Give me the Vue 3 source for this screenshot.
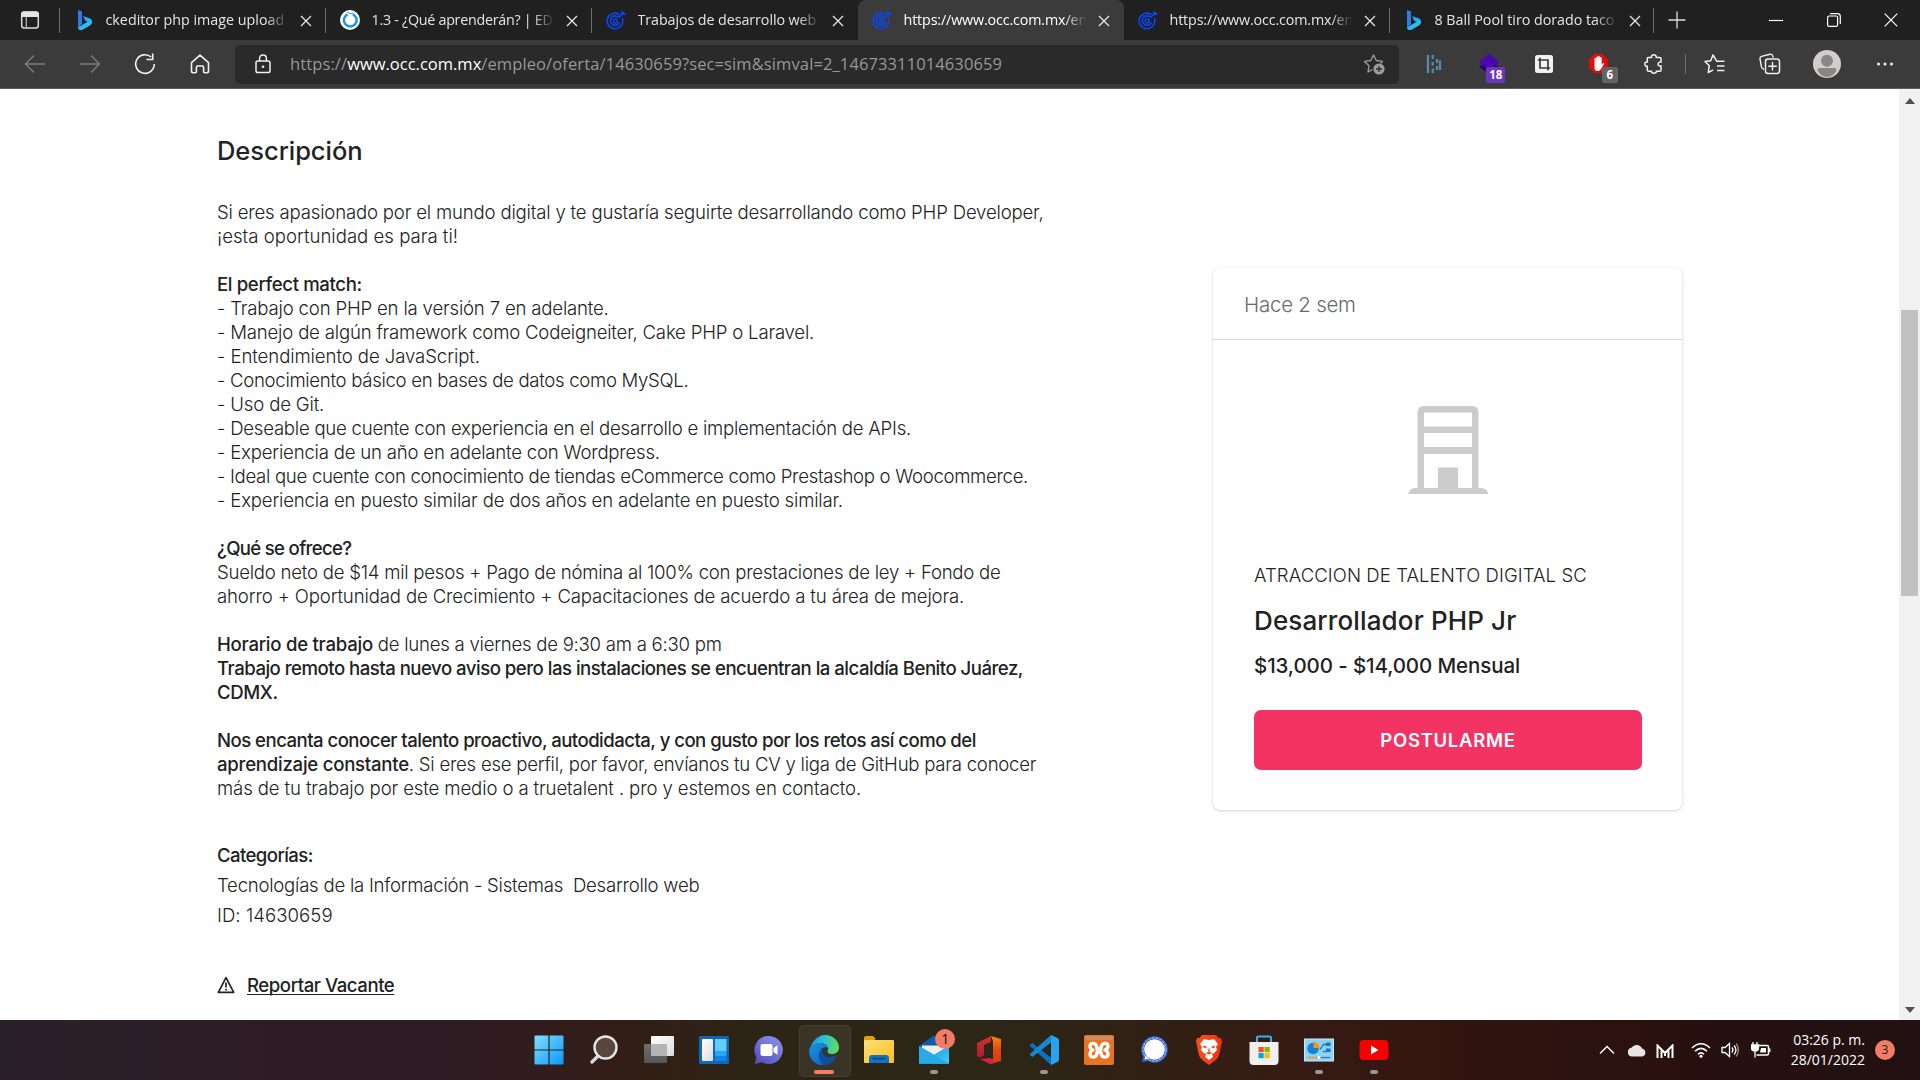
<script setup>
const tabs = [
  { icon: 'bing', title: 'ckeditor php image upload', line: true, spacing: 0 },
  { icon: 'edx', title: '1.3 - ¿Qué aprenderán? | EDUC', line: true, spacing: -0.27 },
  { icon: 'occ', title: 'Trabajos de desarrollo web (PHP)', line: false, spacing: -0.08 },
  { icon: 'occ', title: 'https://www.occ.com.mx/empleo', line: false, active: true, spacing: -0.14 },
  { icon: 'occ', title: 'https://www.occ.com.mx/empleo', line: true, spacing: -0.14 },
  { icon: 'bing', title: '8 Ball Pool tiro dorado taco', line: true, spacing: -0.03 },
]

// s: text segments, those starting with "*" are emphasised; t: letter tracking in px.
const lines = [
  { s: ['Si eres apasionado por el mundo digital y te gustaría seguirte desarrollando como PHP Developer,'], t: -0.19 },
  { s: ['¡esta oportunidad es para ti!'], t: 0 },
  { s: [], t: 0 },
  { s: ['*El perfect match:'], t: -0.37 },
  { s: ['- Trabajo con PHP en la versión 7 en adelante.'], t: -0.19 },
  { s: ['- Manejo de algún framework como Codeigneiter, Cake PHP o Laravel.'], t: -0.2 },
  { s: ['- Entendimiento de JavaScript.'], t: -0.09 },
  { s: ['- Conocimiento básico en bases de datos como MySQL.'], t: -0.31 },
  { s: ['- Uso de Git.'], t: -0.17 },
  { s: ['- Deseable que cuente con experiencia en el desarrollo e implementación de APIs.'], t: -0.245 },
  { s: ['- Experiencia de un año en adelante con Wordpress.'], t: -0.21 },
  { s: ['- Ideal que cuente con conocimiento de tiendas eCommerce como Prestashop o Woocommerce.'], t: -0.31 },
  { s: ['- Experiencia en puesto similar de dos años en adelante en puesto similar.'], t: -0.19 },
  { s: [], t: 0 },
  { s: ['*¿Qué se ofrece?'], t: -0.68 },
  { s: ['Sueldo neto de $14 mil pesos + Pago de nómina al 100% con prestaciones de ley + Fondo de'], t: -0.245 },
  { s: ['ahorro + Oportunidad de Crecimiento + Capacitaciones de acuerdo a tu área de mejora.'], t: -0.145 },
  { s: [], t: 0 },
  { s: ['*Horario de trabajo', ' de lunes a viernes de 9:30 am a 6:30 pm'], t: -0.26 },
  { s: ['*Trabajo remoto hasta nuevo aviso pero las instalaciones se encuentran la alcaldía Benito Juárez,'], t: -0.51 },
  { s: ['*CDMX.'], t: -0.39 },
  { s: [], t: 0 },
  { s: ['*Nos encanta conocer talento proactivo, autodidacta, y con gusto por los retos así como del'], t: -0.54 },
  { s: ['*aprendizaje constante', '. Si eres ese perfil, por favor, envíanos tu CV y liga de GitHub para conocer'], t: -0.25 },
  { s: ['más de tu trabajo por este medio o a truetalent . pro y estemos en contacto.'], t: -0.125 },
]

const apps = [
  { id: 'start' }, { id: 'search' }, { id: 'tasks' }, { id: 'widgets' }, { id: 'chat' },
  { id: 'edge', active: true }, { id: 'files' }, { id: 'mail', open: true, badge: '1' },
  { id: 'office' }, { id: 'code', open: true }, { id: 'xampp' }, { id: 'signal' },
  { id: 'brave' }, { id: 'store' }, { id: 'panel', open: true }, { id: 'youtube', open: true },
]
</script>

<template>
  <div class="screen">
    <svg class="defs" width="0" height="0" aria-hidden="true">
      <defs>
        <linearGradient id="gBing" x1="0" y1="0" x2="0.6" y2="1"><stop offset="0" stop-color="#2f7df0" /><stop offset=".55" stop-color="#21b4f2" /><stop offset="1" stop-color="#3ec8f5" /></linearGradient>
        <linearGradient id="gWin" x1="0" y1="0" x2="1" y2="1"><stop offset="0" stop-color="#7fe0ff" /><stop offset="1" stop-color="#0a97ff" /></linearGradient>
        <linearGradient id="gWhite" x1="0" y1="0" x2="1" y2="1"><stop offset="0" stop-color="#fff" /><stop offset="1" stop-color="#dcdcdc" /></linearGradient>
        <linearGradient id="gGray" x1="0" y1="0" x2="0" y2="1"><stop offset="0" stop-color="#6e6e6e" /><stop offset="1" stop-color="#565656" /></linearGradient>
        <linearGradient id="gChat" x1="1" y1="0" x2="0.2" y2="1"><stop offset="0" stop-color="#8f96ee" /><stop offset="1" stop-color="#5350bd" /></linearGradient>
        <linearGradient id="gEdgeTop" x1="0" y1="0.4" x2="1" y2="0.5"><stop offset="0" stop-color="#1b9be0" /><stop offset=".5" stop-color="#2cc3cf" /><stop offset="1" stop-color="#5fe04d" /></linearGradient>
        <linearGradient id="gEdgeLow" x1="0" y1="0" x2="0.5" y2="1"><stop offset="0" stop-color="#1a8fe0" /><stop offset="1" stop-color="#0f6fc8" /></linearGradient>
        <linearGradient id="gFolder" x1="0" y1="0" x2="1" y2="1"><stop offset="0" stop-color="#ffe07a" /><stop offset="1" stop-color="#fcbd1c" /></linearGradient>
        <linearGradient id="gMail" x1="0" y1="0" x2="1" y2="1"><stop offset="0" stop-color="#1b87d6" /><stop offset="1" stop-color="#3fd0fb" /></linearGradient>
        <linearGradient id="gOffL" x1="0" y1="0" x2="0" y2="1"><stop offset="0" stop-color="#d1322a" /><stop offset="1" stop-color="#a91a3c" /></linearGradient>
        <linearGradient id="gOffR" x1="0" y1="0" x2="0" y2="1"><stop offset="0" stop-color="#f78b0e" /><stop offset=".5" stop-color="#e4470f" /><stop offset="1" stop-color="#d33a12" /></linearGradient>
        <linearGradient id="gBrave" x1="0" y1="0" x2="1" y2="0"><stop offset="0" stop-color="#f4511e" /><stop offset="1" stop-color="#f5300d" /></linearGradient>
      </defs>

      <symbol id="bing" viewBox="0 0 20 20"><path d="M4 0l4 1.5V14l-4 4z" fill="#2b7be9" /><path d="M4 17.6 8 15l5.5-3.2-2.6-1.3L9.2 6 16 8.6c1.700.8 2 2 2 3.400 0 1.300-.7 2.500-1.700 3.200L8 19.900c-1.700.8-4-.3-4-2.300z" fill="url(#gBing)" /></symbol>
      <symbol id="edx" viewBox="0 0 20 20"><circle cx="10" cy="10" r="10" fill="#fff" /><path d="M7.500 4.300A6.400 6.400 0 1 0 13 4.300" fill="none" stroke="#1a94ee" stroke-width="2.400" /><path d="M7.200 2.500l5.800 1.600" stroke="#1a94ee" stroke-width="1" /></symbol>
      <symbol id="occ" viewBox="0 0 20 20"><g fill="none" stroke="#0b45f5"><path d="M13.800 4.800A7.800 7.800 0 1 0 16.200 8" stroke-width="1.600" /><path d="M12.500 7.400a4.700 4.700 0 1 0 1 4.800" stroke-width="1.600" /><circle cx="9.300" cy="11" r="1.900" stroke-width="1.500" /><path d="M12.500 7.800 18 2.200M15.600 4.400l.4-3.200M15.800 4.400l3.600-.4" stroke-width="1.600" /></g></symbol>

      <symbol id="start" viewBox="0 0 30 30"><rect x=".5" y=".5" width="29" height="29" rx="1" fill="url(#gWin)" /><path d="M15 0v30M0 15h30" stroke="#2c2018" stroke-width="1.200" /></symbol>
      <symbol id="search" viewBox="0 0 30 30"><path d="M9.500 20.500 3 27" stroke="#d5d8dc" stroke-width="3.400" stroke-linecap="round" /><circle cx="16.500" cy="12.500" r="11" fill="#57473f" stroke="#e4e6e8" stroke-width="2.400" /></symbol>
      <symbol id="tasks" viewBox="0 0 30 30"><rect x="0" y="9" width="23" height="19" rx="1" fill="url(#gGray)" /><rect x="7" y="1" width="23" height="20" rx="1" fill="url(#gWhite)" /><rect x="7" y="9" width="16" height="12" fill="#b4b4b4" /></symbol>
      <symbol id="widgets" viewBox="0 0 30 30"><rect x="0" y="1" width="30" height="28" rx="1.500" fill="#1267b5" /><rect x="3" y="4" width="11" height="22" rx="1" fill="url(#gWhite)" /><rect x="16" y="4" width="11.500" height="12" fill="#62cbfa" /><rect x="16" y="16" width="11.500" height="5" fill="#2ba6f6" /><rect x="16" y="21" width="11.500" height="5" fill="#0d84e8" /></symbol>
      <symbol id="chat" viewBox="0 0 30 30"><path d="M15 1a14 14 0 1 1-7 26.200L.6 29l1.700-7A14 14 0 0 1 15 1z" fill="url(#gChat)" /><rect x="6.500" y="9" width="12" height="12" rx="2" fill="#fff" /><path d="M19.500 13l4-2.800v9.600l-4-2.800z" fill="#fff" /></symbol>
      <symbol id="edge" viewBox="0 0 30 30"><path d="M1 17C1 8 8 0 16 0c8 0 14 6 14 12.500 0 4-3 6.500-7 6.500-3 0-5-1-4.500-3 .5-2 1-2 .5-3.500C18 9 14 7.500 10 8 5 8.600 1.600 13 1 17z" fill="url(#gEdgeTop)" /><path d="M0 16C1 10.500 6 7.600 11 7.800c4.500.2 7.500 2.700 8 5.200-2.500-1.600-6-.8-7.200 2C10 19 13 25 19 25.500c-2 3-5 4.500-7 4.500C5 29 0 23 0 16z" fill="url(#gEdgeLow)" /><path d="M10 20c0-3.500 2-6.500 4.500-7.500C11.800 17 15 22 20 22.200c3 .1 5-.8 6.700-1.700.6-.3 1.300.2.900.9C25.500 25.500 21 30 15.500 30 11.500 29 10 24 10 20z" fill="#0f4f9e" /></symbol>
      <symbol id="files" viewBox="0 0 30 30"><path d="M0 3q0-2 2-2h7l3 3h-1l-2 3H0z" fill="#e0a00c" /><rect x="0" y="5" width="30" height="23" rx="1" fill="url(#gFolder)" /><path d="M5 28v-5q0-3 3-3h14q3 0 3 3v5z" fill="#1172c8" /><path d="M9 23.600h12" stroke="#0a4987" stroke-width="1.600" stroke-linecap="round" /></symbol>
      <symbol id="mail" viewBox="0 0 30 30"><path d="M0 11 14 1q1-.7 2 0l14 10v6H0z" fill="#0c5cae" /><path d="M3 10.500h24v7L15 23 3 17z" fill="#eee" /><path d="M0 11l15 9 15-9v17.500H0z" fill="#27a4e4" /><path d="M0 28.500 30 11v17.500z" fill="url(#gMail)" /><path d="M0 11l30 17.500H0z" fill="#2aa9e8" /></symbol>
      <symbol id="office" viewBox="0 0 30 30"><path d="M3 8 17 1v6l-7 3v10l-4 3-3-2z" fill="url(#gOffL)" /><path d="M17 1l10 3v22l-10 3v-5h2V6z" fill="url(#gOffR)" /><path d="M6 24l11-1 2 5-3 1z" fill="#d7213f" /></symbol>
      <symbol id="code" viewBox="0 0 30 30"><path d="M1.500 9.300 3.300 8 22 22.500V30L1.500 11.600q-1-1.200 0-2.300z" fill="#0a72bd" /><path d="M1.500 20.700 3.300 22 22 7.500V0L1.500 18.400q-1 1.200 0 2.300z" fill="#1788d2" /><path d="M22 0l6.500 3Q30 3.800 30 5.500v19q0 1.700-1.500 2.500L22 30z" fill="#28a4ee" /></symbol>
      <symbol id="xampp" viewBox="0 0 30 30"><rect width="30" height="30" rx="2" fill="#e87423" /><rect x="1" y="1" width="28" height="4" rx="2" fill="#d18a5a" /><path d="M9.500 8.500q-3.500-.5-3.500 2.700 0 2.800 3 3.800-3 1.200-3 4.200t3.500 3q3.500-.5 3.500-5.200h4q0 4.700 3.500 5.200 3.500 0 3.500-3t-3-4.200q3-1 3-3.800 0-3.200-3.500-2.700Q17 9 17 14h-4q0-5-3.500-5.500z" fill="none" stroke="#fff" stroke-width="3.300" stroke-linejoin="round" /></symbol>
      <symbol id="signal" viewBox="0 0 30 30"><circle cx="15.500" cy="14.500" r="12" fill="#fff" stroke="#3468d8" stroke-width="2.400" /><path d="M3 27l1.500-6.500L9.500 26z" fill="#3468d8" /><circle cx="15.500" cy="14.500" r="11.300" fill="none" stroke="#3468d8" stroke-width="2" /><circle cx="15.500" cy="14.500" r="11.600" fill="none" stroke="#cfdcfa" stroke-width=".9" stroke-dasharray="2.500 1.200" /><path d="M5.500 24.500l1-4 3.500 3.300z" fill="#fff" /></symbol>
      <symbol id="brave" viewBox="0 0 30 30"><path d="M8 0h14l2.500 3L27 3l1 4-1 3q-1 8-3 12.500Q21 26 15 30 9 26 6 22.500 4 18 3 10L2 7l1-4 2.500 0z" fill="url(#gBrave)" /><path d="M10 4l5 1 5-1 4 5-2 3 1 3-3 3-2 1 1 3-4 3-4-3 1-3-2-1-3-3 1-3-2-3z" fill="#fff" /><path d="M10 10.500l3 1.500-1.500 1-3-.8zM20 10.500 17 12l1.500 1 3-.8zM15 12l1 4.500h-2zM11.500 18l3.500-1.300 3.500 1.300-3.500 1.500z" fill="#f4431a" /></symbol>
      <symbol id="store" viewBox="0 0 30 30"><path d="M8 9V2.800Q8 1.500 9.300 1.500h11.400Q22 1.500 22 2.800V9" fill="none" stroke="#2fb4f0" stroke-width="2" /><path d="M.5 7h29v19q0 4-4 4h-21q-4 0-4-4z" fill="#efefef" /><path d="M8 6V4M22 6V4" stroke="#2fb4f0" stroke-width="2" /><path d="M9.500 12h5.200v5.200H9.500z" fill="#f25022" /><path d="M15.500 12h5.200v5.200h-5.200z" fill="#7fba00" /><path d="M9.500 18h5.200v5.200H9.500z" fill="#00a4ef" /><path d="M15.500 18h5.200v5.200h-5.200z" fill="#ffb900" /></symbol>
      <symbol id="panel" viewBox="0 0 30 30"><rect x=".5" y="4" width="29" height="22" fill="#8ed2f3" stroke="#c9ecfb" /><circle cx="9" cy="13.500" r="5.800" fill="#1383cf" /><path d="M9.500 13V6.500a6.500 6.500 0 0 1 6 6.500z" fill="#f7941d" /><path d="M16 14.500l3.500-5h3M19 16.500h3" stroke="#1976b8" stroke-width="1.300" fill="none" /><path d="M22 7.500h4.500v3.500H22zM22 13.500h4.500V17H22z" fill="#1976b8" /><path d="M4 22.500h10" stroke="#f7941d" stroke-width="1.400" /><path d="M14 22.500h12" stroke="#1976b8" stroke-width="1.200" /><circle cx="15" cy="22.500" r="1.500" fill="#fff" /></symbol>
      <symbol id="youtube" viewBox="0 0 30 30"><rect x=".5" y="5" width="29" height="20" rx="4" fill="#f60000" /><path d="M12 10.500l7.500 4.500-7.500 4.500z" fill="#fff" /></symbol>
    </svg>

    <header class="tabstrip">
      <div class="tab-actions">
        <svg width="20" height="20" viewBox="0 0 20 20"><rect x="1.700" y="2" width="16.600" height="16" rx="2.500" fill="none" stroke="#dcdcdc" stroke-width="1.500" /><path d="M1.500 3.500q0-2 2-2h13q2 0 2 2V7h-17z" fill="#e6e6e6" /><path d="M6.300 7v11" stroke="#b5b5b5" stroke-width="1.300" /></svg>
      </div>
      <div v-for="(t, i) in tabs" :key="i" class="tab" :class="{ active: t.active, line: t.line }">
        <svg class="favicon" width="20" height="20"><use :href="'#' + t.icon" /></svg>
        <span class="tab-title" :style="{ letterSpacing: t.spacing + 'px' }">{{ t.title }}</span>
        <svg class="tab-close" width="12" height="12" viewBox="0 0 12 12"><path d="M1 1l10 10M11 1 1 11" stroke="#e6e6e6" stroke-width="1.300" /></svg>
      </div>
      <div class="new-tab"><svg width="18" height="18" viewBox="0 0 18 18"><path d="M9 .5v17M.5 9h17" stroke="#dcdcdc" stroke-width="1.300" /></svg></div>
      <div class="window-buttons">
        <span><svg width="14" height="14" viewBox="0 0 14 14"><path d="M0 7.500h14" stroke="#fff" stroke-width="1.200" /></svg></span>
        <span><svg width="14" height="14" viewBox="0 0 14 14"><rect x=".6" y="3" width="10" height="10.400" rx="1.500" fill="none" stroke="#fff" stroke-width="1.200" /><path d="M3 .7h7.500q2.800 0 2.800 2.800V11" fill="none" stroke="#fff" stroke-width="1.200" /></svg></span>
        <span><svg width="14" height="14" viewBox="0 0 14 14"><path d="M.7.7l12.600 12.600M13.300.7.7 13.300" stroke="#fff" stroke-width="1.200" /></svg></span>
      </div>
    </header>

    <div class="toolbar">
      <nav class="nav">
        <span><svg width="22" height="20" viewBox="0 0 22 20"><path d="M21 10H1.500M10 1.500 1.500 10l8.500 8.500" fill="none" stroke="#7c7c7c" stroke-width="1.400" /></svg></span>
        <span><svg width="22" height="20" viewBox="0 0 22 20"><path d="M1 10h19.500M12 1.500l8.500 8.500-8.500 8.500" fill="none" stroke="#7c7c7c" stroke-width="1.400" /></svg></span>
        <span><svg width="22" height="22" viewBox="0 0 22 22"><path d="M20.300 11a9.300 9.300 0 1 1-3.200-7M12.500 6.500h6.200V.6" fill="none" stroke="#f2f2f2" stroke-width="1.600" /></svg></span>
        <span><svg width="20" height="20" viewBox="0 0 20 20"><path d="M1.500 8.600 10 1.200l8.500 7.400V17q0 1.700-1.700 1.700h-2q-1.200 0-1.200-1.200v-4.200q0-1.300-1.300-1.300H7.700q-1.300 0-1.300 1.300v4.200q0 1.200-1.200 1.200h-2q-1.700 0-1.700-1.700z" fill="none" stroke="#f2f2f2" stroke-width="1.600" stroke-linejoin="round" /></svg></span>
      </nav>
      <div class="address">
        <svg class="lock" width="16" height="20" viewBox="0 0 16 20"><rect x="1" y="7" width="14" height="11.500" rx="1.800" fill="none" stroke="#f0f0f0" stroke-width="1.500" /><path d="M4.600 7V4.400q0-3.300 3.400-3.300t3.400 3.300V7" fill="none" stroke="#f0f0f0" stroke-width="1.500" /><circle cx="8" cy="12.700" r="1.300" fill="#f0f0f0" /></svg>
        <span class="url">https://<b>www.occ.com.mx</b>/empleo/oferta/14630659?sec=sim&amp;simval=2_14673311014630659</span>
        <svg class="fav-add" width="22" height="22" viewBox="0 0 22 22"><path d="M9.500 16.500 5 19l1-6.200-4.500-4.400 6.200-.9L10.500 2l2.800 5.500 6.200.9-2 2" fill="none" stroke="#9a9a9a" stroke-width="1.400" stroke-linejoin="round" /><circle cx="16" cy="16" r="5.600" fill="#9d9d9d" /><path d="M16 13v6M13 16h6" stroke="#2a2a2a" stroke-width="1.300" /></svg>
      </div>
      <div class="extensions">
        <span><svg width="16" height="20" viewBox="0 0 16 20"><path d="M2 1v18M6.700 1v4M6.700 8v3.500M6.700 14.500V19M11 5v4M14 6.500V16M11 12v4" stroke="#538ca3" stroke-width="2.300" fill="none" /></svg></span>
        <span><svg width="22" height="22" viewBox="0 0 22 22"><path d="M1 13.500 11 9l10 4.500L11 21z" fill="#23056e" /><path d="M11 .5 21 9 11 17.500 1 9z" fill="#4a06b0" /></svg><i class="count violet">18</i></span>
        <span><svg width="18" height="18" viewBox="0 0 18 18"><rect width="18" height="18" rx="2.500" fill="#f1f1f1" /><path d="M5 2.800V13h10.200M2.800 5H13v10.200" fill="none" stroke="#3a3a3a" stroke-width="1.700" /></svg></span>
        <span><svg width="22" height="22" viewBox="0 0 22 22"><path d="M6.500 1h8L20 6.500v8L14.500 20h-8L1 14.500v-8z" fill="#e40d0d" /><path d="M6.500 11V6q0-1 .9-1t.9 1V4.400q0-1 .9-1t.9 1V4q0-1 .9-1t.9 1v1q0-.9.900-.9t.9.900v7l1-1.500q.8-.8 1.500 0L13 16q-1 2-3.500 2-3 0-3-3.500z" fill="#fff" /></svg><i class="count gray">6</i></span>
        <span><svg width="20" height="20" viewBox="0 0 20 20"><path d="M4 3.500h3.500q-.3-2.700 2.300-2.700t2.400 2.700H16q1 0 1 1v3.600q-3-.2-3 2t3 2V16q0 1.200-1 1.200h-3.600q.1 2-2.500 2t-2.400-2H4.500q-1.200 0-1.200-1.200v-3.700q-2.500.2-2.500-2.200t2.500-2.200V4.500q0-1 .7-1z" fill="none" stroke="#f0f0f0" stroke-width="1.500" /></svg></span>
        <i class="divider"></i>
        <span><svg width="22" height="20" viewBox="0 0 22 20"><path d="M12.500 6.800 9 1 6.700 6.800 1 7.500l4.300 4.200L4.200 18.500l5-2.700M12 7.300h8.500M13 12h7.500M13 16.500h7.500" fill="none" stroke="#f0f0f0" stroke-width="1.500" stroke-linejoin="round" /></svg></span>
        <span><svg width="22" height="22" viewBox="0 0 22 22"><path d="M5 16.500Q3 15.500 2.500 14L1 6q-.3-2 1.500-2.600L11 1.200q2-.5 2.700 1.600l.5 1.700" fill="none" stroke="#f0f0f0" stroke-width="1.400" /><rect x="6.500" y="6" width="14" height="14.500" rx="2.500" fill="none" stroke="#f0f0f0" stroke-width="1.500" /><path d="M13.500 9v8.500M9.300 13.300h8.500" stroke="#f0f0f0" stroke-width="1.400" /></svg></span>
        <span class="profile"><svg width="28" height="28" viewBox="0 0 28 28"><circle cx="14" cy="14" r="14" fill="#d0cecc" /><circle cx="14" cy="10.800" r="6" fill="#8a8683" /><path d="M4.500 20q0-2 2-2h15q2 0 2 2-3 7-9.500 7t-9.500-7z" fill="#8a8683" /></svg></span>
        <span class="more"><svg width="18" height="4" viewBox="0 0 18 4"><circle cx="2.500" cy="2" r="1.500" fill="#f0f0f0" /><circle cx="9" cy="2" r="1.500" fill="#f0f0f0" /><circle cx="15.500" cy="2" r="1.500" fill="#f0f0f0" /></svg></span>
      </div>
    </div>

    <div class="page">
      <main class="offer">
        <h1>Descripción</h1>
        <div class="body">
          <p v-for="(l, i) in lines" :key="i" class="row" :style="{ letterSpacing: l.t + 'px' }"><template v-for="(s, j) in l.s" :key="j"><b v-if="s[0] === '*'">{{ s.slice(1) }}</b><template v-else>{{ s }}</template></template></p>
        </div>
        <div class="categories">
          <p class="label"><b>Categorías:</b></p>
          <p>Tecnologías de la Información - Sistemas&nbsp; Desarrollo web</p>
          <p class="offer-id">ID: 14630659</p>
        </div>
        <a class="report">
          <svg width="18" height="18" viewBox="0 0 18 18"><path d="M9 1.600 16.700 16.300H1.300z" fill="none" stroke="#222" stroke-width="1.700" stroke-linejoin="round" /><path d="M9 6.500v5M9 12.700v1.800" stroke="#222" stroke-width="1.700" /></svg>
          <span>Reportar Vacante</span>
        </a>
      </main>

      <aside class="card">
        <div class="card-date"><span>Hace 2 sem</span></div>
        <div class="card-body">
          <svg class="building" width="82" height="90" viewBox="0 0 82 90"><path d="M10.500 83V8q0-7 6-7h49q6 0 6 7v75h2.500q6 0 7.500 6H1q1.500-6 7.500-6z" fill="#ccc" /><path d="M17 7.500h48V21.500H17zM17 28h48v14H17zM17 49h48v34H51V62.500H31V83H17z" fill="#fff" /></svg>
          <p class="company">ATRACCION DE TALENTO DIGITAL SC</p>
          <h2>Desarrollador PHP Jr</h2>
          <p class="salary">$13,000 - $14,000 Mensual</p>
          <button class="apply">POSTULARME</button>
        </div>
      </aside>

      <div class="scrollbar">
        <svg width="10" height="6" viewBox="0 0 10 6"><path d="M0 6 5 0l5 6z" fill="#505050" /></svg>
        <div class="thumb"></div>
        <svg width="10" height="6" viewBox="0 0 10 6"><path d="M0 0l5 6 5-6z" fill="#505050" /></svg>
      </div>
    </div>

    <footer class="taskbar">
      <div class="apps">
        <div v-for="a in apps" :key="a.id" class="app" :class="{ active: a.active, open: a.open }">
          <svg width="30" height="30"><use :href="'#' + a.id" /></svg>
          <i v-if="a.badge" class="badge">{{ a.badge }}</i>
        </div>
      </div>
      <div class="tray">
        <svg class="chev" width="16" height="10" viewBox="0 0 16 10"><path d="M1 8.500 8 1.500l7 7" fill="none" stroke="#fff" stroke-width="1.400" /></svg>
        <svg class="cloud" width="20" height="14" viewBox="0 0 20 14"><path d="M5 13.500a4.400 4.400 0 0 1-.6-8.700A6 6 0 0 1 15 5.400a4.200 4.200 0 0 1 .5 8.100z" fill="#e6e6e6" /></svg>
        <svg class="mal" width="18" height="14" viewBox="0 0 18 14"><path d="M1.500 14V1.500L9 9l7.500-7.500V14M5.500 14V6.500M12.500 14V6.500M9 9v3" fill="none" stroke="#fff" stroke-width="2" /></svg>
        <svg class="wifi" width="20" height="16" viewBox="0 0 20 16"><g fill="none" stroke="#fff" stroke-width="1.500"><path d="M1 6q9-8.500 18 0M4 9.200q6-5.700 12 0M7 12.200q3-2.700 6 0" /></g><circle cx="10" cy="14.200" r="1.500" fill="#fff" /></svg>
        <svg class="vol" width="18" height="16" viewBox="0 0 18 16"><g fill="none" stroke="#fff" stroke-width="1.300"><path d="M1 5.500h3L8.500 1.500v13L4 10.500H1zM11 5.500q2 2.500 0 5M13.200 3.500q3.500 4.500 0 9" /><path d="M15.300 1.500q4 6.500 0 13" stroke="#999" /></g></svg>
        <svg class="bat" width="20" height="18" viewBox="0 0 20 18"><path d="M8 4.500h8q1.500 0 1.500 1.500v6.500q0 1.500-1.500 1.500H5.500" fill="none" stroke="#fff" stroke-width="1.500" /><path d="M18.500 7.500v3.500" stroke="#fff" stroke-width="2" /><path d="M10 7h5v4.500H9z" fill="#fff" /><path d="M2 1v3M6 1v3M.5 4h7v3q0 3-3.500 3t-3.500-3zM4 10v6.500" fill="#fff" stroke="#fff" stroke-width="1.300" /></svg>
        <div class="clock"><span>03:26 p. m.</span><span>28/01/2022</span></div>
        <i class="notice">3</i>
      </div>
    </footer>
  </div>
</template>

<style>
body { margin: 0; overflow: hidden; }
</style>

<style scoped>
* { box-sizing: border-box; }
p, h1, h2 { margin: 0; font-weight: inherit; }
i { font-style: normal; }
svg { flex: none; display: block; }
.defs { position: absolute; }
.screen { width: 1920px; height: 1080px; overflow: hidden; display: flex; flex-direction: column; font-family: "Open Sans", "Noto Sans", sans-serif; background: #fff; }

.tabstrip { height: 40px; flex: none; display: flex; background: #202020; }
.tab-actions { width: 60px; display: flex; align-items: center; justify-content: center; position: relative; }
.tab { width: 266px; flex: none; display: flex; align-items: center; padding-left: 13.500px; position: relative; color: #e4e4e4; }
.tab:nth-child(7) { width: 264px; padding-left: 12.500px; }
.tab-actions::after, .tab.line::after { content: ""; position: absolute; right: 0; top: 8px; width: 1px; height: 25px; background: #6c6c6c; }
.tab.active { background: #3b3b3b; border-radius: 8px 8px 0 0; color: #fff; }
.tab-title { width: 181px; margin-left: 12px; font-size: 14.300px; line-height: 20px; white-space: nowrap; overflow: hidden; -webkit-mask-image: linear-gradient(90deg, #000 160px, transparent 183px); mask-image: linear-gradient(90deg, #000 160px, transparent 183px); }
.tab-close { margin-left: 13px; margin-top: 1px; }
.new-tab { width: 46px; display: flex; align-items: center; justify-content: center; }
.window-buttons { margin-left: auto; display: flex; }
.window-buttons span { width: 57.500px; display: flex; align-items: center; justify-content: center; }

.toolbar { height: 49px; flex: none; display: flex; align-items: center; background: #3b3b3b; border-bottom: 1px solid #5e5e5e; }
.nav { display: flex; width: 235px; padding-left: 7px; }
.nav span { width: 55px; height: 40px; display: flex; align-items: center; justify-content: center; }
.address { width: 1164px; height: 39px; border-radius: 5px; background: #2a2a2a; display: flex; align-items: center; padding: 0 14px 0 20px; }
.url { margin-left: 19px; margin-top: -2px; font-size: 16.500px; color: #989898; white-space: nowrap; letter-spacing: 0.110px; }
.url b { font-weight: 400; color: #fff; letter-spacing: 0; }
.fav-add { margin-left: auto; }
.extensions { flex: 1; display: flex; align-items: center; padding-left: 7px; }
.extensions span { width: 55.200px; flex: none; height: 40px; display: flex; align-items: center; justify-content: center; position: relative; }
.divider { width: 1px; height: 20px; background: #707070; margin: 0 1px 0 3px; }
.profile { margin-left: 2.500px; }
.more { margin-left: 2px; }
.count { position: absolute; right: 3px; bottom: 1px; height: 16px; min-width: 16px; padding: 0 3px; border-radius: 2px; color: #fff; font-size: 11.500px; font-weight: 700; line-height: 16px; text-align: center; }
.violet { background: #6c35bd; right: 11px; }
.gray { background: #636363; right: 9px; }

.page { height: 931px; flex: none; display: flex; background: #fff; font-family: "HK Grotesk", Inter, "Open Sans", sans-serif; color: #222; }
.offer { width: 1213px; padding-left: 217px; padding-top: 44px; font-size: 18.600px; font-weight: 300; letter-spacing: -0.250px; }
.offer b { font-weight: 500; }
h1 { font-size: 25.500px; font-weight: 500; line-height: 36px; letter-spacing: -0.050px; }
.body { margin-top: 31px; }
.row { height: 24px; line-height: 24px; white-space: pre; }
.categories { margin-top: 40px; line-height: 30px; white-space: nowrap; }
.label { letter-spacing: -0.600px; }
.offer-id { letter-spacing: 0.050px; }
.report { display: flex; align-items: center; margin-top: 42px; height: 26px; font-weight: 500; letter-spacing: -0.450px; }
.report span { margin-left: 12px; line-height: 24px; text-decoration: underline; text-decoration-thickness: 1px; text-decoration-skip-ink: none; text-underline-offset: 2px; }

.card { width: 469px; height: 542px; margin-top: 179px; border-radius: 8px; background: #fff; box-shadow: 0 1px 3px rgba(0, 0, 0, .16), 0 0 8px rgba(0, 0, 0, .04); }
.card-date { height: 72px; border-bottom: 1px solid #d8d8d8; padding: 2px 0 0 31px; display: flex; align-items: center; font-size: 20.500px; letter-spacing: -0.250px; font-weight: 300; color: #6a6a6a; }
.card-body { padding: 65px 40px 0 41px; display: flex; flex-direction: column; }
.building { align-self: center; }
.company { margin-top: 68px; font-size: 18.500px; line-height: 24px; letter-spacing: 0.100px; font-weight: 300; white-space: nowrap; }
h2 { margin-top: 18px; font-size: 26px; line-height: 32px; font-weight: 500; letter-spacing: 0.130px; white-space: nowrap; }
.salary { margin-top: 16px; font-size: 20.500px; line-height: 26px; font-weight: 500; letter-spacing: -0.100px; white-space: nowrap; }
.apply { margin-top: 31px; height: 60px; border: 0; border-radius: 7px; background: #f33364; color: #fff; font: 600 18.500px Inter, sans-serif; letter-spacing: 0.700px; }

.scrollbar { width: 21px; margin-left: auto; background: #f1f1f1; display: flex; flex-direction: column; align-items: center; padding: 9px 0 7px; }
.thumb { width: 17px; height: 286px; margin-top: 206px; margin-bottom: auto; background: #c1c1c1; }

.taskbar { height: 60px; flex: none; display: flex; background: linear-gradient(90deg, #2a2029 0, #2d1d27 220px, #2f1b22 480px, #331e16 620px, #2c2415 760px, #2c2717 980px, #2f2214 1110px, #361b14 1300px, #32150f 1450px, #27100f 1700px, #221112 1920px); }
.apps { display: flex; padding-left: 521px; }
.app { width: 55.050px; display: flex; align-items: center; justify-content: center; position: relative; }
.app.active::before { content: ""; position: absolute; left: 3px; top: 5px; width: 50px; height: 50px; border-radius: 5px; background: rgba(255, 255, 255, .07); border: 1px solid rgba(255, 255, 255, .06); }
.app svg { position: relative; }
.app.open::after, .app.active::after { content: ""; position: absolute; left: 50%; bottom: 6px; width: 8px; height: 4px; margin-left: -4px; border-radius: 2px; background: #9c9690; }
.app.active::after { width: 20px; margin-left: -10px; background: #f47c66; }
.badge { position: absolute; left: 29px; top: 9px; width: 20px; height: 20px; border-radius: 50%; background: #f47c66; color: #111; font-size: 14px; line-height: 20px; text-align: center; }
.tray { margin-left: auto; display: flex; align-items: center; padding-right: 25px; color: #fff; }
.cloud { margin-left: 12px; }
.mal { margin-left: 9px; margin-top: 2px; }
.wifi { margin-left: 17px; }
.vol { margin-left: 10px; }
.bat { margin-left: 12px; }
.clock { width: 85px; margin-left: 9px; display: flex; flex-direction: column; text-align: right; font-size: 14px; line-height: 20px; white-space: nowrap; }
.notice { width: 20px; height: 20px; margin-left: 10px; border-radius: 50%; background: #f47c66; color: #222; font-size: 12px; line-height: 20px; text-align: center; }
</style>
